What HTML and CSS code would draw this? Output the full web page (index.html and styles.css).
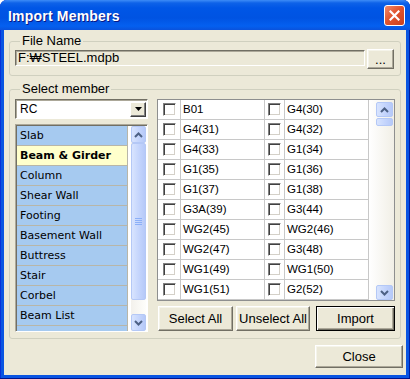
FILE: index.html
```html
<!DOCTYPE html>
<html lang="en">
<head>
  <meta charset="UTF-8">
  <title>Import Members</title>
  <link rel="stylesheet" href="styles.css">
</head>
<body>

<div class="window">
  <div class="titlebar">
    <span class="title">Import Members</span>
    <span class="close-btn">
      <svg width="11" height="11" viewBox="0 0 11 11"><path d="M1.5 1.5 L9.5 9.5 M9.5 1.5 L1.5 9.5" stroke="#fff" stroke-width="2.2" stroke-linecap="square"/></svg>
    </span>
  </div>

  <div class="client">
    <fieldset class="group file-group">
      <legend>File Name</legend>
      <div class="file-row">
        <div class="textbox">F:₩STEEL.mdpb</div>
        <button class="btn browse-btn">...</button>
      </div>
    </fieldset>

    <fieldset class="group member-group">
      <legend>Select member</legend>
      <div class="member-body">
        <div class="left-col">
          <div class="combo">
            <span class="combo-text">RC</span>
            <span class="combo-btn">
              <svg width="7" height="4" viewBox="0 0 7 4"><path d="M0 0 H7 L3.5 4 Z" fill="#000"/></svg>
            </span>
          </div>
          <div class="type-list">
            <div class="type-items">
              <div class="type-item">Slab</div>
              <div class="type-item selected">Beam &amp; Girder</div>
              <div class="type-item">Column</div>
              <div class="type-item">Shear Wall</div>
              <div class="type-item">Footing</div>
              <div class="type-item">Basement Wall</div>
              <div class="type-item">Buttress</div>
              <div class="type-item">Stair</div>
              <div class="type-item">Corbel</div>
              <div class="type-item">Beam List</div>
              <div class="type-item"></div>
            </div>
            <div class="vscroll list-scroll">
              <span class="sb-btn">
                <svg width="9" height="6" viewBox="0 0 9 6"><path d="M1 5 L4.5 1.5 L8 5" fill="none" stroke="#4D6185" stroke-width="2"/></svg>
              </span>
              <span class="sb-thumb long">
                <svg width="7" height="8" viewBox="0 0 7 8"><path d="M0 .5 H7 M0 2.5 H7 M0 4.5 H7 M0 6.5 H7" stroke="#8CB0F8" stroke-width="1"/></svg>
              </span>
              <span class="sb-track"></span>
              <span class="sb-btn">
                <svg width="9" height="6" viewBox="0 0 9 6"><path d="M1 1 L4.5 4.5 L8 1" fill="none" stroke="#4D6185" stroke-width="2"/></svg>
              </span>
            </div>
          </div>
        </div>

        <div class="right-col">
          <div class="member-grid">
            <div class="grid-table">
              <span class="cell chk-cell"><i class="chk"></i></span><span class="cell">B01</span>
              <span class="cell chk-cell"><i class="chk"></i></span><span class="cell">G4(30)</span>
              <span class="cell chk-cell"><i class="chk"></i></span><span class="cell">G4(31)</span>
              <span class="cell chk-cell"><i class="chk"></i></span><span class="cell">G4(32)</span>
              <span class="cell chk-cell"><i class="chk"></i></span><span class="cell">G4(33)</span>
              <span class="cell chk-cell"><i class="chk"></i></span><span class="cell">G1(34)</span>
              <span class="cell chk-cell"><i class="chk"></i></span><span class="cell">G1(35)</span>
              <span class="cell chk-cell"><i class="chk"></i></span><span class="cell">G1(36)</span>
              <span class="cell chk-cell"><i class="chk"></i></span><span class="cell">G1(37)</span>
              <span class="cell chk-cell"><i class="chk"></i></span><span class="cell">G1(38)</span>
              <span class="cell chk-cell"><i class="chk"></i></span><span class="cell">G3A(39)</span>
              <span class="cell chk-cell"><i class="chk"></i></span><span class="cell">G3(44)</span>
              <span class="cell chk-cell"><i class="chk"></i></span><span class="cell">WG2(45)</span>
              <span class="cell chk-cell"><i class="chk"></i></span><span class="cell">WG2(46)</span>
              <span class="cell chk-cell"><i class="chk"></i></span><span class="cell">WG2(47)</span>
              <span class="cell chk-cell"><i class="chk"></i></span><span class="cell">G3(48)</span>
              <span class="cell chk-cell"><i class="chk"></i></span><span class="cell">WG1(49)</span>
              <span class="cell chk-cell"><i class="chk"></i></span><span class="cell">WG1(50)</span>
              <span class="cell chk-cell"><i class="chk"></i></span><span class="cell">WG1(51)</span>
              <span class="cell chk-cell"><i class="chk"></i></span><span class="cell">G2(52)</span>
            </div>
            <div class="grid-scroll-area">
              <div class="vscroll grid-scroll">
                <span class="sb-btn">
                  <svg width="9" height="6" viewBox="0 0 9 6"><path d="M1 5 L4.5 1.5 L8 5" fill="none" stroke="#4D6185" stroke-width="2"/></svg>
                </span>
                <span class="sb-thumb short"></span>
                <span class="sb-track"></span>
                <span class="sb-btn">
                  <svg width="9" height="6" viewBox="0 0 9 6"><path d="M1 1 L4.5 4.5 L8 1" fill="none" stroke="#4D6185" stroke-width="2"/></svg>
                </span>
              </div>
            </div>
          </div>
          <div class="btn-row">
            <button class="btn select-all">Select All</button>
            <button class="btn unselect-all">Unselect All</button>
            <button class="btn default import-btn">Import</button>
          </div>
        </div>
      </div>
    </fieldset>

    <div class="footer">
      <button class="btn close-dlg">Close</button>
    </div>
  </div>
</div>

</body>
</html>
```

FILE: styles.css
```css
body {
  margin: 0;
  background: #fff;
  font-family: "Liberation Sans", Arial, sans-serif;
  font-size: 13px;
  color: #000;
}

.window {
  width: 410px;
  height: 379px;
  display: flex;
  flex-direction: column;
  background: #0A55E2;
  border-radius: 7px 7px 0 0;
  overflow: hidden;
  box-shadow: inset 0 -1px #00138C, inset 1px 0 #0831D9, inset -1px 0 #001EA0;
}

.titlebar {
  height: 30px;
  flex: none;
  display: flex;
  align-items: center;
  justify-content: space-between;
  padding: 0 5px 0 8px;
  background: linear-gradient(#3D8CF7 0, #0E62E8 3px, #0056E6 8px, #0053E2 18px, #0460F0 26px, #0A52DC 30px);
}

.title {
  color: #fff;
  font-weight: bold;
  font-size: 14px;
  letter-spacing: 0.2px;
  text-shadow: 1px 1px #0A1883;
  margin-top: 1px;
}

.close-btn {
  width: 19px;
  height: 19px;
  border: 1px solid #fff;
  border-radius: 3px;
  display: flex;
  align-items: center;
  justify-content: center;
  background: linear-gradient(135deg, #F08A6D 0, #E1552F 45%, #C9401E 100%);
  margin-top: 1px;
}

.client {
  flex: 1;
  margin: 0 4px 4px;
  background: #ECE9D8;
  padding: 4px 3px 0 5px;
  display: flex;
  flex-direction: column;
}

/* group boxes */
.group {
  margin: 0 2px 0 0;
  border: 1px solid #D0D0BF;
  border-radius: 3px;
  min-width: 0;
}

.group legend {
  padding: 0 2px;
  margin-left: 5px;
  line-height: 14px;
  font-size: 13px;
}

.file-group {
  padding: 1px 6px 6px 5px;
}

.member-group {
  margin-top: 6px;
  padding: 3px 6px 6px 5px;
}

.file-row {
  display: flex;
  align-items: flex-start;
  gap: 2px;
}

.textbox {
  flex: 1;
  height: 16px;
  margin-top: 1px;
  box-sizing: border-box;
  border: 1px solid;
  border-color: #716F64 #fff #fff #716F64;
  box-shadow: inset 1px 1px #ACA899;
  padding: 0 2px;
  line-height: 14px;
  background: #ECE9D8;
}

/* buttons */
.btn {
  font-family: "Liberation Sans", Arial, sans-serif;
  font-size: 13px;
  color: #000;
  background: #ECE9D8;
  border: 1px solid;
  border-color: #fff #716F64 #716F64 #fff;
  box-shadow: inset -1px -1px #ACA899, inset 1px 1px #F5F4EA;
  padding: 0;
  box-sizing: border-box;
}

.btn.default {
  border: 1px solid #000;
  box-shadow: inset 1px 1px #fff, inset -1px -1px #716F64, inset -2px -2px #ACA899;
}

.browse-btn {
  width: 27px;
  height: 20px;
  line-height: 12px;
  padding-top: 2px;
}

/* member selection */
.member-body {
  display: flex;
  gap: 9px;
}

.left-col {
  width: 133px;
  display: flex;
  flex-direction: column;
  gap: 5px;
}

.combo {
  height: 20px;
  box-sizing: border-box;
  border: 1px solid;
  border-color: #716F64 #fff #fff #716F64;
  box-shadow: inset 1px 1px #ACA899;
  background: #fff;
  display: flex;
  align-items: center;
  justify-content: space-between;
  padding: 0 1px 0 4px;
  font-size: 12px;
}

.combo-btn {
  width: 16px;
  height: 15px;
  box-sizing: border-box;
  background: #ECE9D8;
  border: 1px solid;
  border-color: #fff #404040 #404040 #fff;
  box-shadow: inset -1px -1px #808080;
  display: flex;
  align-items: center;
  justify-content: center;
}

.type-list {
  height: 208px;
  box-sizing: border-box;
  border: 1px solid;
  border-color: #ACA899 #fff #fff #ACA899;
  box-shadow: inset 1px 1px #716F64;
  padding: 1px 1px 0 1px;
  display: flex;
  background: #fff;
  overflow: hidden;
}

.type-items {
  width: 112px;
  font-family: "DejaVu Sans", Verdana, sans-serif;
  font-size: 11px;
}

.type-item {
  height: 20px;
  box-sizing: border-box;
  border-bottom: 1px solid #B8B6A8;
  border-right: 1px solid #B8B6A8;
  background: #A6CAF0;
  padding-left: 3px;
  line-height: 19px;
}

.type-item.selected {
  background: #FFFFCC;
  font-weight: bold;
}

/* XP scroll bars */
.vscroll {
  display: flex;
  flex-direction: column;
  background: linear-gradient(to right, #F3F1EC, #FEFEFB);
}

.list-scroll {
  width: 15px;
  margin-left: 3px;
}

.sb-btn,
.sb-thumb {
  box-sizing: border-box;
  border: 1px solid #B4C8F6;
  border-radius: 2px;
  background: linear-gradient(to right, #D8E4FE, #C2D3FC 60%, #B6C9F8);
  display: flex;
  align-items: center;
  justify-content: center;
  flex: none;
}

.list-scroll .sb-btn {
  height: 17px;
}

.sb-thumb.long {
  height: 157px;
}

.sb-thumb.short {
  height: 8px;
  margin-top: 1px;
}

.sb-track {
  flex: 1;
}

/* member grid */
.right-col {
  flex: 1;
  display: flex;
  flex-direction: column;
  gap: 5px;
}

.member-grid {
  height: 202px;
  box-sizing: border-box;
  border: 1px solid #8E8F8F;
  display: flex;
  background: #fff;
}

.grid-table {
  display: grid;
  grid-template-columns: 23px 84px 20px 84px;
  grid-auto-rows: 20px;
  font-size: 11.5px;
}

.cell {
  box-sizing: border-box;
  border-right: 1px solid #C8C8C8;
  border-bottom: 1px solid #C8C8C8;
  padding-left: 2px;
  line-height: 19px;
}

.chk-cell {
  padding: 0;
  display: flex;
  align-items: center;
  justify-content: center;
}

.chk {
  width: 13px;
  height: 13px;
  box-sizing: border-box;
  border: 1px solid;
  border-color: #808080 #fff #fff #808080;
  box-shadow: inset 1px 1px #404040, inset -1px -1px #D4D0C8;
  background: #fff;
}

.grid-scroll-area {
  flex: 1;
  display: flex;
  justify-content: flex-end;
  padding: 2px 1px 0 0;
  background: linear-gradient(to right, #fff, #F1EFE6);
}

.grid-scroll {
  width: 17px;
  background: none;
}

.grid-scroll .sb-btn {
  height: 15px;
}

.btn-row {
  display: flex;
  padding-left: 1px;
}

.select-all {
  width: 75px;
  height: 25px;
}

.unselect-all {
  width: 74px;
  height: 25px;
  margin-left: 3px;
}

.import-btn {
  width: 79px;
  height: 25px;
  margin-left: 6px;
}

.footer {
  display: flex;
  justify-content: flex-end;
  margin-top: 6px;
}

.close-dlg {
  width: 88px;
  height: 23px;
}
```
